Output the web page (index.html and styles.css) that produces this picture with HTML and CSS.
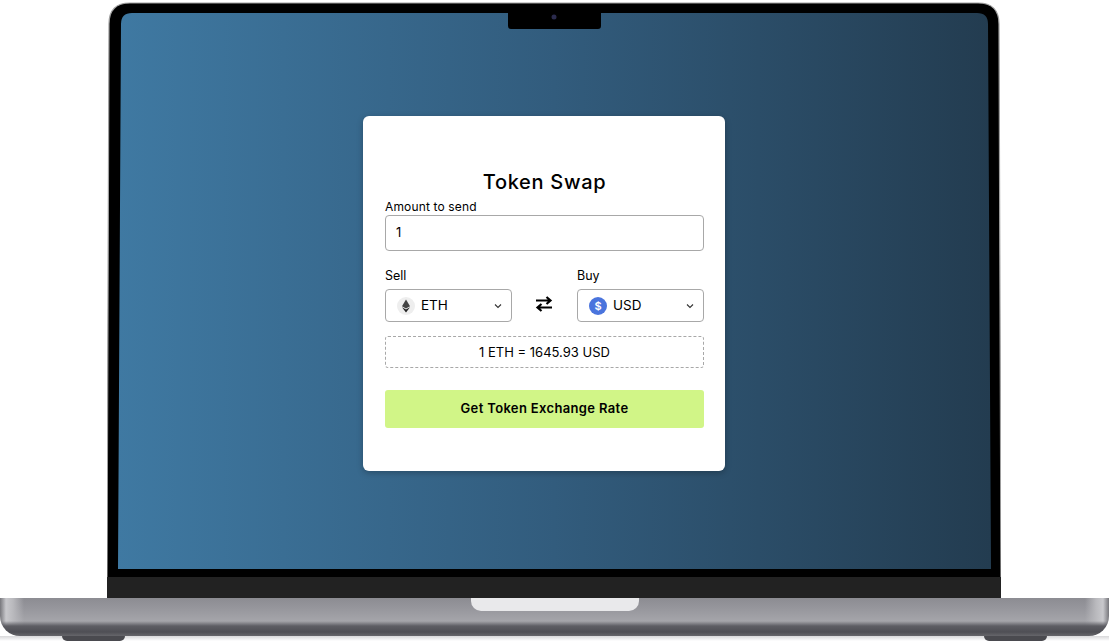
FILE: index.html
```html
<!DOCTYPE html>
<html lang="en">
<head>
  <meta charset="UTF-8" />
  <meta name="viewport" content="width=device-width, initial-scale=1.0"/>
  <title>Token Swap</title>
  <link rel="stylesheet" href="styles.css">
</head>
<body>
  <div class="lid">
    <!-- laptop lid drawn in page coordinates, it narrows a little to the top -->
    <svg class="lid-art" viewBox="107 2 894 596" width="894" height="596">
      <defs>
        <linearGradient id="screenFill" x1="0" y1="0" x2="1" y2="0">
          <stop offset="0" stop-color="#3f79a2"/>
          <stop offset="0.5" stop-color="#325c7d"/>
          <stop offset="1" stop-color="#233c50"/>
        </linearGradient>
      </defs>
      <path d="M107 578 L109 24 Q109 3 130 3 L978 3 Q999 3 999 24 L1001 578 Z" fill="#000" stroke="#a0a0a0" stroke-width="1.2"/>
      <rect x="107" y="577" width="894" height="21" fill="#222"/>
      <path d="M118 569 L121 24 Q121 13 132 13 L508 13 L508 26 Q508 29 511 29 L598 29 Q601 29 601 26 L601 13 L977 13 Q988 13 988 24 L991 569 Z" fill="url(#screenFill)"/>
      <circle cx="554" cy="17" r="2.5" fill="#2b2b4d"/>
    </svg>

    <main class="card">
      <h1>Token Swap</h1>
      <label class="amount-label" for="amount">Amount to send</label>
      <input id="amount" class="amount" type="text" value="1" />

      <div class="pair">
        <div class="pick">
          <span class="pick-label">Sell</span>
          <div class="select">
            <span class="coin coin-eth">
              <svg viewBox="0 0 18 18" width="18" height="18">
                <path d="M9 2.5 L13 9.2 L9 11.4 L5 9.2 Z" fill="#444"/>
                <path d="M5 10.2 L9 12.5 L13 10.2 L9 15.5 Z" fill="#222"/>
              </svg>
            </span>
            <span class="coin-name">ETH</span>
            <svg class="chevron" viewBox="0 0 8 6" width="8" height="6"><path d="M1 1.5 L4 4.5 L7 1.5" fill="none" stroke="#333" stroke-width="1.1"/></svg>
          </div>
        </div>

        <svg class="swap" viewBox="0 0 18 16" width="18" height="16">
          <path d="M1 4.5 H15 M11.5 1 L15.5 4.5 L11.5 8 M17 11.5 H3 M6.5 8 L2.5 11.5 L6.5 15" fill="none" stroke="#000" stroke-width="2.2"/>
        </svg>

        <div class="pick">
          <span class="pick-label">Buy</span>
          <div class="select">
            <span class="coin coin-usd">$</span>
            <span class="coin-name">USD</span>
            <svg class="chevron" viewBox="0 0 8 6" width="8" height="6"><path d="M1 1.5 L4 4.5 L7 1.5" fill="none" stroke="#333" stroke-width="1.1"/></svg>
          </div>
        </div>
      </div>

      <div class="rate">1 ETH = 1645.93 USD</div>
      <button class="get-rate" type="button">Get Token Exchange Rate</button>
    </main>
  </div>

  <div class="base">
    <div class="base-notch"></div>
  </div>
  <div class="feet">
    <span class="foot"></span>
    <span class="foot"></span>
  </div>
</body>
</html>
```

FILE: styles.css
```css
* {
  margin: 0;
  padding: 0;
  box-sizing: border-box;
}
html, body {
  height: 643px;
  overflow: hidden;
}
body {
  background: #fff;
  padding-top: 2px;
  font-family: Inter, "Liberation Sans", sans-serif;
  color: #000;
}

.lid {
  position: relative;
  width: 894px;
  height: 596px;
  margin-left: 107px;
  padding: 114px 0 0 256px;
}
.lid-art {
  position: absolute;
  top: 0;
  left: 0;
}

.card {
  position: relative;
  display: flex;
  flex-direction: column;
  width: 362px;
  height: 355px;
  padding: 53px 21px 0 22px;
  background: #fff;
  border-radius: 6px;
  box-shadow: 0 2px 6px rgba(0, 0, 0, 0.25);
}
.card h1 {
  font-size: 20px;
  line-height: 26px;
  font-weight: 500;
  text-align: center;
  letter-spacing: 0.7px;
}
.amount-label {
  margin-top: 4px;
  font-size: 12px;
  line-height: 16px;
  letter-spacing: 0.15px;
}
.amount {
  height: 36px;
  padding: 0 10px 2px;
  border: 1px solid #a8a8a8;
  border-radius: 4px;
  font: inherit;
  font-size: 13px;
  color: #000;
}

.pair {
  display: flex;
  justify-content: space-between;
  align-items: center;
  margin-top: 17px;
}
.pick {
  display: flex;
  flex-direction: column;
  width: 127px;
}
.pick-label {
  font-size: 12.5px;
  line-height: 16px;
  margin-bottom: 5px;
}
.select {
  display: flex;
  align-items: center;
  height: 33px;
  padding: 0 9px 0 11px;
  border: 1px solid #a8a8a8;
  border-radius: 4px;
}
.coin {
  display: flex;
  align-items: center;
  justify-content: center;
  width: 18px;
  height: 18px;
  border-radius: 50%;
}
.coin-eth {
  background: #eee;
}
.coin-usd {
  background: #4a74dd;
  color: #fff;
  font-size: 11px;
  font-weight: 600;
}
.coin-name {
  flex: 1;
  margin: 0 0 2px 6px;
  font-size: 13.5px;
}
.swap {
  margin: 18px 1px 0 0;
}

.rate {
  height: 32px;
  margin-top: 14px;
  border: 1px dashed #a8a8a8;
  border-radius: 3px;
  font-size: 13px;
  line-height: 30px;
  text-align: center;
}
.get-rate {
  height: 38px;
  margin-top: 22px;
  padding-bottom: 2px;
  border: none;
  border-radius: 3px;
  background: #d1f587;
  font: inherit;
  font-size: 13px;
  font-weight: 600;
  letter-spacing: 0.35px;
  color: #000;
}

.base {
  display: flex;
  justify-content: center;
  height: 38px;
  border-radius: 0 0 20px 20px;
  background:
    linear-gradient(180deg, rgba(94, 94, 100, 0) 23px, #5e5e64 28px, #4f4f55 34px, #66666b 38px),
    linear-gradient(90deg, #77777c 0, #c8c8cc 6px, #b9b9bd 13px, rgba(160, 160, 165, 0) 24px, rgba(160, 160, 165, 0) 1085px, #b9b9bd 1096px, #c8c8cc 1103px, #77777c 1109px),
    linear-gradient(180deg, #8c8c92 0, #96969c 10px, #a6a6ab 24px);
}
.base-notch {
  width: 168px;
  height: 13px;
  border-radius: 0 0 10px 10px;
  background: #e9e9eb;
}
.feet {
  display: flex;
  justify-content: space-between;
  height: 5px;
  padding: 0 62px;
  background: linear-gradient(180deg, #d8d8da 0, #efeff0 3px, #fff 5px);
}
.foot {
  width: 63px;
  height: 5px;
  border-radius: 0 0 14px 14px;
  background: #4a4a4f;
}
```
